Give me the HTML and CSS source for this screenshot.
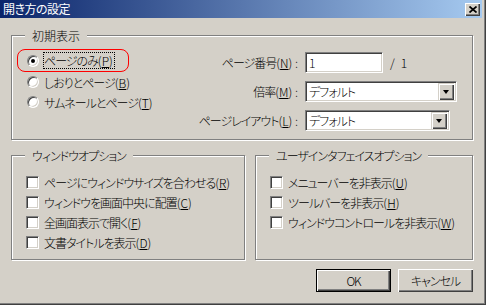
FILE: index.html
```html
<!DOCTYPE html>
<html lang="ja">
<head>
<meta charset="utf-8">
<title>開き方の設定</title>
<link rel="stylesheet" href="styles.css">
</head>
<body>
<div class="window">
  <div class="titlebar">
    <span class="title">開き方の設定</span>
    <span class="close-btn"><svg width="8" height="7" viewBox="0 0 8 7"><path d="M0.5 0.5 L7.5 6.5 M7.5 0.5 L0.5 6.5" stroke="#000" stroke-width="1.7" fill="none"/></svg></span>
  </div>
  <div class="client">
    <fieldset class="group group-initial">
      <legend>初期表示</legend>
      <div class="initial-body">
        <div class="radio-list">
          <div class="radio-row highlight"><span class="radio checked"></span><span class="focus-label">ページのみ<span class="key">(<u>P</u>)</span></span></div>
          <div class="radio-row"><span class="radio"></span><span class="opt-label">しおりとページ<span class="key">(<u>B</u>)</span></span></div>
          <div class="radio-row"><span class="radio"></span><span class="opt-label">サムネールとページ<span class="key">(<u>T</u>)</span></span></div>
        </div>
        <div class="form-col">
          <div class="form-row">
            <span class="field-label">ページ番号<span class="key">(<u>N</u>) :</span></span>
            <span class="textbox">1</span>
            <span class="page-total"><span>/</span><span class="total-num">1</span></span>
          </div>
          <div class="form-row">
            <span class="field-label">倍率<span class="key">(<u>M</u>) :</span></span>
            <span class="combo combo-wide"><span class="combo-text">デフォルト</span><span class="combo-btn"><span class="tri"></span></span></span>
          </div>
          <div class="form-row">
            <span class="field-label">ページレイアウト<span class="key">(<u>L</u>) :</span></span>
            <span class="combo combo-narrow"><span class="combo-text">デフォルト</span><span class="combo-btn"><span class="tri"></span></span></span>
          </div>
        </div>
      </div>
    </fieldset>

    <div class="group-pair">
      <fieldset class="group group-window">
        <legend>ウィンドウオプション</legend>
        <div class="check-list">
          <div class="check-row"><span class="checkbox"></span><span class="opt-label">ページにウィンドウサイズを合わせる<span class="key">(<u>R</u>)</span></span></div>
          <div class="check-row"><span class="checkbox"></span><span class="opt-label">ウィンドウを画面中央に配置<span class="key">(<u>C</u>)</span></span></div>
          <div class="check-row"><span class="checkbox"></span><span class="opt-label">全画面表示で開く<span class="key">(<u>F</u>)</span></span></div>
          <div class="check-row"><span class="checkbox"></span><span class="opt-label">文書タイトルを表示<span class="key">(<u>D</u>)</span></span></div>
        </div>
      </fieldset>
      <fieldset class="group group-ui">
        <legend>ユーザインタフェイスオプション</legend>
        <div class="check-list">
          <div class="check-row"><span class="checkbox"></span><span class="opt-label">メニューバーを非表示<span class="key">(<u>U</u>)</span></span></div>
          <div class="check-row"><span class="checkbox"></span><span class="opt-label">ツールバーを非表示<span class="key">(<u>H</u>)</span></span></div>
          <div class="check-row"><span class="checkbox"></span><span class="opt-label">ウィンドウコントロールを非表示<span class="key">(<u>W</u>)</span></span></div>
        </div>
      </fieldset>
    </div>

    <div class="button-row">
      <span class="btn btn-default">OK</span>
      <span class="btn">キャンセル</span>
    </div>
  </div>
</div>
</body>
</html>
```
FILE: styles.css
```css
* { box-sizing: border-box; }
html, body { margin: 0; padding: 0; }
body {
  width: 486px;
  height: 305px;
  overflow: hidden;
  background: #d4d0c8;
  color: #000;
  font-family: "Noto Sans CJK JP", "Noto Sans", sans-serif;
  font-size: 12px;
  font-weight: 300;
  line-height: 15px;
  letter-spacing: -1px;
  font-feature-settings: "palt";
}
u { text-decoration: underline; text-underline-offset: 1px; }
.key { letter-spacing: 0; }

.window {
  width: 486px;
  height: 305px;
  background: #d4d0c8;
  box-shadow: inset -1px -1px 0 #404040, inset -2px -2px 0 #808080;
  display: flex;
  flex-direction: column;
}

.titlebar {
  height: 18px;
  margin-right: 4px;
  background: linear-gradient(to right, #0a246a, #a6caf0);
  display: flex;
  align-items: flex-start;
  padding-left: 3px;
}
.title {
  color: #fff;
  line-height: 18px;
  letter-spacing: -0.5px;
  font-weight: 400;
}
.close-btn {
  margin-left: auto;
  margin-right: 2px;
  margin-top: 3px;
  width: 15px;
  height: 13px;
  background: #d4d0c8;
  box-shadow: inset 1px 1px 0 #fff, inset -1px -1px 0 #404040, inset -2px -2px 0 #808080;
  display: flex;
  align-items: center;
  justify-content: center;
}
.close-btn svg { display: block; margin-top: -1px; }

.client {
  padding: 10px 13px 0 11px;
}

.group {
  margin: 0;
  padding: 0;
  min-width: 0;
  height: 112px;
  border: 1px solid #808080;
  box-shadow: 1px 1px 0 #fff, inset 1px 1px 0 #fff;
}
.group legend {
  margin-left: 13px;
  padding: 0 7px;
  line-height: 15px;
  height: 15px;
  background: #d4d0c8;
}
.group-initial legend { letter-spacing: 0; }

.initial-body {
  display: flex;
  padding: 6px 0 0 5px;
}
.radio-list {
  width: 112px;
  display: flex;
  flex-direction: column;
}
.radio-row {
  display: flex;
  align-items: center;
  height: 20px;
  border: 1px solid transparent;
  padding-left: 9px;
}
.radio-row.highlight {
  height: 23px;
  border-color: #ff0000;
  border-radius: 8px;
}
.radio {
  position: relative;
  flex: none;
  width: 12px;
  height: 12px;
  border-radius: 50%;
  background: #fff;
  border: 1px solid;
  border-color: #808080 #fff #fff #808080;
  box-shadow: inset 1px 1px 0 #404040, inset -1px -1px 0 #d4d0c8;
}
.radio.checked::after {
  content: "";
  position: absolute;
  left: 3px;
  top: 3px;
  width: 4px;
  height: 4px;
  border-radius: 50%;
  background: #000;
}
.focus-label {
  margin-left: 4px;
  border: 1px dotted #000;
  padding: 0 1px 0 0;
  line-height: 15px;
  white-space: nowrap;
}
.opt-label {
  margin-left: 5px;
  white-space: nowrap;
}

.form-col {
  display: flex;
  flex-direction: column;
  gap: 8px;
  padding-top: 3px;
}
.form-row {
  display: flex;
  align-items: center;
  height: 21px;
}
.field-label {
  width: 169px;
  text-align: right;
  margin-right: 7px;
  white-space: nowrap;
}
.textbox, .combo {
  height: 21px;
  background: #fff;
  border: 1px solid;
  border-color: #808080 #fff #fff #808080;
  box-shadow: inset 1px 1px 0 #404040, inset -1px -1px 0 #d4d0c8;
  display: flex;
  align-items: center;
}
.textbox {
  width: 78px;
  padding-left: 3px;
}
.page-total {
  margin-left: 7px;
  display: flex;
}
.total-num { margin-left: 7px; }

.combo { padding: 2px; }
.combo-wide { width: 152px; }
.combo-narrow { width: 145px; }
.combo-text {
  flex: 1;
  padding-left: 1px;
}
.combo-btn {
  width: 16px;
  height: 17px;
  background: #d4d0c8;
  box-shadow: inset 1px 1px 0 #d4d0c8, inset 2px 2px 0 #fff, inset -1px -1px 0 #404040, inset -2px -2px 0 #808080;
  display: flex;
  align-items: center;
  justify-content: center;
}
.tri {
  width: 0;
  height: 0;
  border-left: 3.5px solid transparent;
  border-right: 3.5px solid transparent;
  border-top: 4px solid #000;
  margin-top: 1px;
}

.group-pair {
  display: flex;
  gap: 10px;
  margin-top: 8px;
}
.group-window { width: 234px; }
.group-ui { width: 218px; }
.check-list {
  display: flex;
  flex-direction: column;
  padding: 9px 0 0 14px;
}
.check-row {
  display: flex;
  align-items: center;
  height: 20px;
}
.checkbox {
  flex: none;
  width: 13px;
  height: 13px;
  background: #fff;
  border: 1px solid;
  border-color: #808080 #fff #fff #808080;
  box-shadow: inset 1px 1px 0 #404040, inset -1px -1px 0 #d4d0c8;
}

.button-row {
  display: flex;
  justify-content: flex-end;
  gap: 7px;
  margin-top: 9px;
}
.btn {
  width: 75px;
  height: 23px;
  display: flex;
  align-items: center;
  justify-content: center;
  background: #d4d0c8;
  box-shadow: inset 1px 1px 0 #fff, inset -1px -1px 0 #404040, inset -2px -2px 0 #808080;
}
.btn-default {
  border: 1px solid #000;
  box-shadow: inset 1px 1px 0 #fff, inset -1px -1px 0 #404040, inset -2px -2px 0 #808080;
}
```
